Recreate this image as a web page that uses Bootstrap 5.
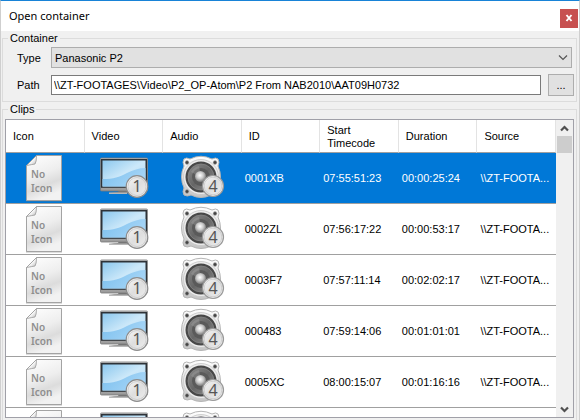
<!DOCTYPE html>
<html lang="en">
<head>
<meta charset="utf-8">
<meta name="viewport" content="width=device-width, initial-scale=1">
<title>Open container</title>
<link href="https://cdn.jsdelivr.net/npm/bootstrap@5.3.0/dist/css/bootstrap.min.css" rel="stylesheet">
<style>
body { font: 11px/14px "Liberation Sans", Arial, sans-serif; color: #000; background: #f0f0f0; }
.dialog { border: 1px solid #cfcfcf; border-top-color: #1883d7; border-bottom: 0; }
.titlebar { height: 30px; padding: 0 1px 0 8px; }
.titlebar h1 { font: 11px/16px "Noto Sans", "Open Sans", sans-serif; }
.close-btn { width: 18px; height: 19px; background: #c75050; color: #fff; }
.group { border: 1px solid #dcdcdc; margin: 0 2px 0 1px; }
.group legend { float: none; width: auto; margin: 0 0 0 5px; padding: 0 2px; font-size: 11px; line-height: 14px; }
.clips { border-bottom: 0; padding: 0 2px 2px; }
.clips legend { margin-left: 3px; }
.line { padding-left: 14px; }
.line label { width: 34px; flex: none; }
.type-line { margin: 2px 4px 6px 0; }
.path-line { margin: 0 2px 5px 0; gap: 7px; }
.field { font-size: 11px; line-height: 14px; border-radius: 0; color: #000; }
.type-box { height: 21px; padding: 0 20px 0 3px; border: 1px solid #adadad; background-color: #e1e1e1; background-image: none; }
.chev { right: 4px; top: 7px; pointer-events: none; }
.path-box { height: 20px; padding: 0 2px; border: 1px solid #7a7a7a; background: #fff; }
.browse { width: 26px; height: 22px; flex: none; border: 1px solid #adadad; background: #e1e1e1; }
.grid-box { border: 1px solid #a0a0a8; margin-top: 3px; background: #fff; }
.clip-table { table-layout: fixed; width: 100%; border-collapse: separate; border-spacing: 0; }
.clip-table th { height: 33px; padding: 1px 7px 0; font-weight: 400; line-height: 13px; vertical-align: middle; border-right: 1px solid #e3e3e3; border-bottom: 1px solid #a0a0a0; }
.clip-table td { height: 51px; padding: 0 3px; vertical-align: middle; border-bottom: 1px solid #a0a0a0; white-space: nowrap; overflow: hidden; text-overflow: ellipsis; }
.clip-table td:first-child { padding: 0 4px 0 2px; }
.clip-table td svg { display: block; margin: 0 auto; }
.clip-table td svg text { font-family: "Noto Sans", sans-serif; }
.t-doc { font-size: 10px; font-weight: 600; fill: #8e8e8e; }
.t-num { font-size: 16px; fill: #555; text-anchor: middle; }
.picked td { background: #0078d7; color: #fff; }
.scroller { width: 17px; flex: none; background: #f0f0f0; padding: 0 1px; }
.scroller button { height: 16px; }
.thumb { height: 17px; background: #cdcdcd; }
</style>
<script src="https://cdn.jsdelivr.net/npm/bootstrap@5.3.0/dist/js/bootstrap.bundle.min.js"></script>
</head>
<body>
<svg class="position-absolute" width="0" height="0" aria-hidden="true">
  <defs>
    <linearGradient id="paper" x1="0" y1="0" x2=".3" y2="1"><stop offset="0" stop-color="#fff"/><stop offset=".5" stop-color="#eee"/><stop offset=".75" stop-color="#dcdcdc"/><stop offset="1" stop-color="#f2f2f2"/></linearGradient>
    <linearGradient id="fold" x1="0" y1="0" x2="1" y2="1"><stop offset=".3" stop-color="#d8d8d8"/><stop offset=".5" stop-color="#fff"/><stop offset="1" stop-color="#b5b5b5"/></linearGradient>
    <linearGradient id="screen" x1="0" y1="0" x2="1" y2="1"><stop offset="0" stop-color="#8cc8ee"/><stop offset=".5" stop-color="#cce8f9"/><stop offset="1" stop-color="#b5dcf6"/></linearGradient>
    <linearGradient id="wave" x1="0" y1="0" x2="1" y2=".4"><stop offset="0" stop-color="#7cc0ee"/><stop offset="1" stop-color="#a4d4f6"/></linearGradient>
    <linearGradient id="silver" x1="0" y1="0" x2="0" y2="1"><stop offset="0" stop-color="#f4f4f4"/><stop offset="1" stop-color="#999"/></linearGradient>
    <linearGradient id="coin" x1="0" y1="0" x2="1" y2="1"><stop offset="0" stop-color="#fafafa"/><stop offset=".5" stop-color="#dedede"/><stop offset="1" stop-color="#f0f0f0"/></linearGradient>
    <linearGradient id="frame" x1="0" y1="0" x2="0" y2="1"><stop offset="0" stop-color="#fff"/><stop offset="1" stop-color="#c4c4c4"/></linearGradient>
    <linearGradient id="cone" x1="0" y1="0" x2="1" y2="1"><stop offset="0" stop-color="#8a8a8a"/><stop offset=".5" stop-color="#666"/><stop offset="1" stop-color="#909090"/></linearGradient>
    <radialGradient id="ball" cx=".45" cy=".4" r=".6"><stop offset="0" stop-color="#fff"/><stop offset=".5" stop-color="#ccc"/><stop offset="1" stop-color="#777"/></radialGradient>
  </defs>
  <symbol id="doc" viewBox="0 0 38 48">
    <path d="M11.500 2H37V47.500H1V12Z" fill="#777" opacity=".5"/>
    <path d="M11.500 1.500H36.500V46.500H1.500V11.500Z" fill="url(#paper)" stroke="#a3a3a3"/>
    <path d="M11.500 1.500Q11.500 8 10 10Q7 10.500 1.500 11.500Z" fill="url(#fold)" stroke="#999" stroke-width=".8"/>
  </symbol>
  <symbol id="monitor" viewBox="0 0 50 48">
    <path d="M20 36H34L35 38H43V39.500H10Q10 38.500 19 38Z" fill="#777"/>
    <path d="M10 38.500H28V40H10Z" fill="#b8b8b8"/>
    <rect x="1.500" y="4" width="47" height="33" rx="1" fill="url(#silver)" stroke="#777" stroke-width=".8"/>
    <rect x="2" y="4.800" width="46" height="29" fill="#2e3338"/>
    <rect x="3.500" y="6.500" width="43" height="26" fill="url(#screen)"/>
    <path d="M3.500 25C15 25 20 23 28 19C34 16 40 14 46.500 14V32.500H3.500Z" fill="url(#wave)"/>
    <circle cx="38" cy="32.500" r="10.800" fill="url(#coin)" stroke="#8c8c8c" stroke-width="1.200"/>
    <circle cx="38" cy="32.500" r="9" fill="none" stroke="#c9c9c9" stroke-width=".8"/>
  </symbol>
  <symbol id="speaker" viewBox="0 0 46 48">
    <path d="M5 5Q7 3 11 5Q22 -.5 33 5Q37 3 39 5Q41 8 39 12Q44 23 39 34Q41 38 39 41Q36 43 32 41Q22 46 12 41Q8 43 5 41Q3 38 5 34Q0 23 5 12Q3 8 5 5Z" fill="url(#frame)" stroke="#b5b5b5"/>
    <circle cx="22" cy="23" r="17.500" fill="#ededed" stroke="#c6c6c6" stroke-width=".8"/>
    <circle cx="22" cy="23" r="15.500" fill="#484848"/>
    <circle cx="22" cy="23" r="13" fill="url(#cone)" stroke="#858585" stroke-width=".8"/>
    <circle cx="22" cy="23" r="9" fill="#5a5a5a"/>
    <path d="M22 23L12 18A11 11 0 0 1 20 12ZM22 23L32 27A11 11 0 0 1 26 33Z" fill="#aaa" opacity=".35"/>
    <circle cx="21.500" cy="22.500" r="5.500" fill="url(#ball)"/>
    <g fill="#444" stroke="#bbb" stroke-width=".6"><circle cx="8" cy="8.500" r="1.900"/><circle cx="36" cy="8.500" r="1.900"/><circle cx="8" cy="37.500" r="1.900"/></g>
    <circle cx="34" cy="32" r="10.500" fill="url(#coin)" stroke="#999" stroke-width="1.200"/>
    <circle cx="34" cy="32" r="8.800" fill="none" stroke="#c9c9c9" stroke-width=".8"/>
  </symbol>
</svg>

<main class="dialog vh-100 d-flex flex-column overflow-hidden">
  <header class="titlebar bg-white d-flex align-items-center justify-content-between flex-shrink-0">
    <h1 class="m-0">Open container</h1>
    <button type="button" class="close-btn border-0 p-0 mt-1" aria-label="Close"><svg class="d-block mx-auto" width="8" height="8" viewBox="0 0 8 8"><path d="M1.500 1L6.500 7M6.500 1L1.500 7" stroke="#fff" stroke-width="1.900"/></svg></button>
  </header>

  <fieldset class="group flex-shrink-0">
    <legend>Container</legend>
    <div class="line type-line d-flex align-items-center">
      <label for="type">Type</label>
      <div class="position-relative flex-grow-1">
        <select id="type" class="form-select field type-box"><option>Panasonic P2</option></select>
        <svg class="chev position-absolute" width="10" height="7" viewBox="0 0 10 7" aria-hidden="true"><path d="M1 1.500L5 5.500L9 1.500" fill="none" stroke="#555" stroke-width="1.200"/></svg>
      </div>
    </div>
    <div class="line path-line d-flex align-items-center">
      <div class="d-flex align-items-center flex-grow-1">
        <label for="path">Path</label>
        <input id="path" type="text" class="form-control field path-box" value="\\ZT-FOOTAGES\Video\P2_OP-Atom\P2 From NAB2010\AAT09H0732">
      </div>
      <button type="button" class="browse p-0" aria-label="Browse">...</button>
    </div>
  </fieldset>

  <fieldset class="group clips d-flex flex-column flex-grow-1 overflow-hidden">
    <legend class="align-self-start">Clips</legend>
    <div class="grid-box d-flex flex-grow-1 overflow-hidden">
      <div class="flex-grow-1 overflow-hidden">
        <table class="clip-table">
          <thead><tr><th>Icon</th><th>Video</th><th>Audio</th><th>ID</th><th>Start Timecode</th><th>Duration</th><th>Source</th></tr></thead>
          <tbody>
            <tr class="picked"><td><svg width="38" height="48"><use href="#doc"/><text class="t-doc" x="6" y="24">No</text><text class="t-doc" x="6" y="38">Icon</text></svg></td><td><svg width="50" height="48"><use href="#monitor"/><text class="t-num" x="38" y="38">1</text></svg></td><td><svg width="46" height="48"><use href="#speaker"/><text class="t-num" x="34" y="38">4</text></svg></td><td>0001XB</td><td>07:55:51:23</td><td>00:00:25:24</td><td>\\ZT-FOOTA...</td></tr>
            <tr><td><svg width="38" height="48"><use href="#doc"/><text class="t-doc" x="6" y="24">No</text><text class="t-doc" x="6" y="38">Icon</text></svg></td><td><svg width="50" height="48"><use href="#monitor"/><text class="t-num" x="38" y="38">1</text></svg></td><td><svg width="46" height="48"><use href="#speaker"/><text class="t-num" x="34" y="38">4</text></svg></td><td>0002ZL</td><td>07:56:17:22</td><td>00:00:53:17</td><td>\\ZT-FOOTA...</td></tr>
            <tr><td><svg width="38" height="48"><use href="#doc"/><text class="t-doc" x="6" y="24">No</text><text class="t-doc" x="6" y="38">Icon</text></svg></td><td><svg width="50" height="48"><use href="#monitor"/><text class="t-num" x="38" y="38">1</text></svg></td><td><svg width="46" height="48"><use href="#speaker"/><text class="t-num" x="34" y="38">4</text></svg></td><td>0003F7</td><td>07:57:11:14</td><td>00:02:02:17</td><td>\\ZT-FOOTA...</td></tr>
            <tr><td><svg width="38" height="48"><use href="#doc"/><text class="t-doc" x="6" y="24">No</text><text class="t-doc" x="6" y="38">Icon</text></svg></td><td><svg width="50" height="48"><use href="#monitor"/><text class="t-num" x="38" y="38">1</text></svg></td><td><svg width="46" height="48"><use href="#speaker"/><text class="t-num" x="34" y="38">4</text></svg></td><td>000483</td><td>07:59:14:06</td><td>00:01:01:01</td><td>\\ZT-FOOTA...</td></tr>
            <tr><td><svg width="38" height="48"><use href="#doc"/><text class="t-doc" x="6" y="24">No</text><text class="t-doc" x="6" y="38">Icon</text></svg></td><td><svg width="50" height="48"><use href="#monitor"/><text class="t-num" x="38" y="38">1</text></svg></td><td><svg width="46" height="48"><use href="#speaker"/><text class="t-num" x="34" y="38">4</text></svg></td><td>0005XC</td><td>08:00:15:07</td><td>00:01:16:16</td><td>\\ZT-FOOTA...</td></tr>
            <tr><td><svg width="38" height="48"><use href="#doc"/></svg></td><td><svg width="50" height="48"><use href="#monitor"/></svg></td><td><svg width="46" height="48"><use href="#speaker"/></svg></td><td></td><td></td><td></td><td></td></tr>
          </tbody>
        </table>
      </div>
      <div class="scroller d-flex flex-column">
        <button type="button" class="border-0 p-0 bg-transparent" aria-label="Scroll up"><svg class="d-block mx-auto" width="9" height="7" viewBox="0 0 9 7"><path d="M1 5.500L4.500 2L8 5.500" fill="none" stroke="#505050" stroke-width="2.200"/></svg></button>
        <div class="thumb"></div>
        <button type="button" class="border-0 p-0 bg-transparent mt-auto" aria-label="Scroll down"><svg class="d-block mx-auto" width="9" height="7" viewBox="0 0 9 7"><path d="M1 1.500L4.500 5L8 1.500" fill="none" stroke="#505050" stroke-width="2.200"/></svg></button>
      </div>
    </div>
  </fieldset>
</main>
</body>
</html>
